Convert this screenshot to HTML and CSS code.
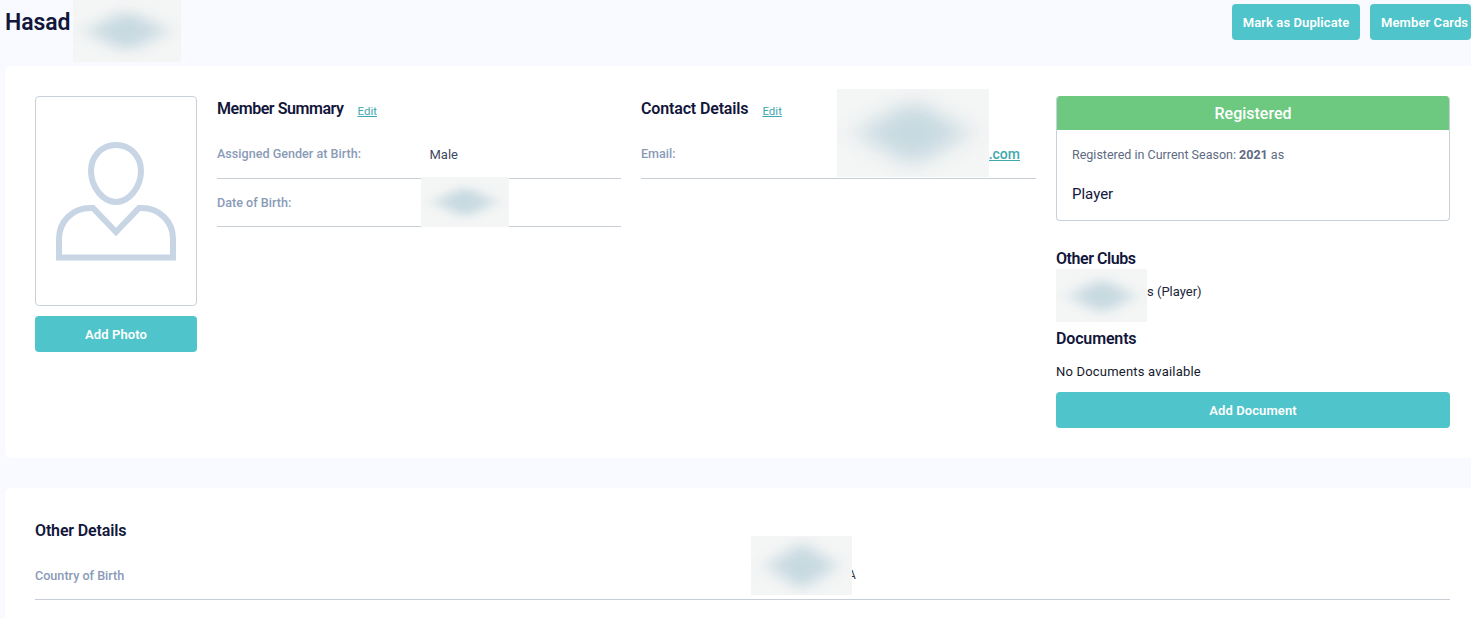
FILE: index.html
```html
<!DOCTYPE html>
<html lang="en">
<head>
<meta charset="utf-8">
<title>Hasad</title>
<link rel="stylesheet" href="styles.css">
</head>
<body>
<header class="top">
  <h1 class="name">Hasad</h1>
  <div class="actions">
    <button class="btn btn-top">Mark as Duplicate</button>
    <button class="btn btn-top">Member Cards</button>
  </div>
</header>
<main class="main">
  <section class="card card-member">
    <div class="photo-col">
      <div class="photo">
        <svg class="avatar" viewBox="0 0 120 122" width="120" height="122" fill="none" stroke="#c7d5e5" stroke-width="6">
          <path d="M60 4C74 4 85 15 85 30C85 46 73 61 60 61C47 61 35 46 35 30C35 15 46 4 60 4Z"/>
          <path d="M3 116.5V98C3 80 17 67 34 67H37L60 91L83 67H86C103 67 117 80 117 98V116.5Z"/>
        </svg>
      </div>
      <button class="btn btn-block">Add Photo</button>
    </div>
    <div class="info-col">
      <div class="sec-head"><h2 class="sec-title tight">Member Summary</h2><a class="edit" href="#">Edit</a></div>
      <div class="row row-first"><span class="label">Assigned Gender at Birth:</span><span class="value">Male</span></div>
      <div class="row"><span class="label">Date of Birth:</span></div>
    </div>
    <div class="info-col">
      <div class="sec-head"><h2 class="sec-title">Contact Details</h2><a class="edit" href="#">Edit</a></div>
      <div class="row row-first row-email"><span class="label">Email:</span><a class="mail" href="#">x.com</a></div>
    </div>
    <div class="side-col">
      <div class="status">
        <div class="status-head">Registered</div>
        <div class="status-body">
          <p class="season">Registered in Current Season: <b>2021</b> as</p>
          <p class="role">Player</p>
        </div>
      </div>
      <h2 class="sec-title tight side-title">Other Clubs</h2>
      <p class="club">s (Player)</p>
      <h2 class="sec-title">Documents</h2>
      <p class="no-docs">No Documents available</p>
      <button class="btn btn-block">Add Document</button>
    </div>
  </section>
  <section class="card card-other">
    <h2 class="sec-title">Other Details</h2>
    <div class="row row-other"><span class="label">Country of Birth</span><span class="country">A</span></div>
  </section>
</main>
<div class="blur blur-name"></div>
<div class="blur blur-email"></div>
<div class="blur blur-dob"></div>
<div class="blur blur-club"></div>
<div class="blur blur-country"></div>
</body>
</html>
```
FILE: styles.css
```css
* { box-sizing: border-box; }
html, body { height: 618px; overflow: hidden; }
body { margin: 0; position: relative; background: #f8faff; color: #11163a; font-family: Roboto, "Liberation Sans", sans-serif; }
h1, h2, p { margin: 0; }
.top { display: flex; justify-content: space-between; align-items: flex-start; height: 66px; padding: 4px 0 0 5px; }
.name { font-size: 23px; font-weight: 600; line-height: 38px; color: #11163a; letter-spacing: -0.1px; }
.actions { display: flex; gap: 10px; width: 239px; flex: none; }
.btn { border: 0; border-radius: 4px; background: #4fc4ca; color: #fff; padding: 1px 0 0; font: 600 13px/16px Roboto, "Liberation Sans", sans-serif; letter-spacing: 0.1px; }
.btn-top { height: 36px; flex: none; }
.btn-top:first-child { width: 128px; }
.btn-top:last-child { width: 101px; text-align: left; padding-left: 11px; white-space: nowrap; }
.main { width: 1480px; padding-left: 5px; }
.card { background: #fff; border-radius: 6px; padding: 30px; }
.card-member { display: flex; gap: 20px; height: 392px; }
.photo-col { width: 162px; flex: none; display: flex; flex-direction: column; gap: 10px; }
.photo { height: 210px; border: 1px solid #c8d0da; border-radius: 4px; display: flex; justify-content: center; padding-top: 44px; }
.avatar { display: block; }
.btn-block { width: 100%; height: 36px; }
.info-col { flex: none; min-width: 0; }
.info-col:nth-child(2) { width: 404px; }
.info-col:nth-child(3) { width: 395px; }
.sec-head { display: flex; align-items: center; gap: 14px; height: 26px; }
.sec-title { font-size: 16px; font-weight: 600; line-height: 26px; color: #11163a; letter-spacing: -0.15px; }
.tight { letter-spacing: -0.45px; }
.edit { font-size: 11.5px; line-height: 16px; color: #3fa9ae; text-decoration: underline; margin-top: 3px; }
.row { display: flex; align-items: center; height: 48px; border-bottom: 1px solid #c8ced6; }
.row-first { margin-top: 8px; height: 48.5px; }
.label { font-size: 12.6px; font-weight: 500; color: #8a9bb8; }
.info-col .label { width: 212.5px; flex: none; }
.value { font-size: 13px; color: #3f4862; padding-top: 1px; }
.row-email { justify-content: space-between; padding-right: 16px; }
.mail { font-size: 14px; font-weight: 500; color: #3fa9ae; }
.side-col { width: 394px; flex: none; }
.status { height: 125px; border: 1px solid #c8d0da; border-top: 0; border-radius: 4px; overflow: hidden; }
.status-head { height: 34px; margin: 0 -1px; background: #6cc97f; color: #fff; font-size: 16px; font-weight: 500; line-height: 35px; text-align: center; }
.status-body { padding: 17px 15px 0; }
.season { font-size: 12.5px; line-height: 16px; color: #5e6b82; }
.season b { font-weight: 700; }
.role { margin-top: 22px; font-size: 15px; line-height: 18px; color: #11163a; }
.side-title { margin-top: 25px; }
.club { height: 54px; padding: 12px 0 0 91px; font-size: 13px; line-height: 16px; color: #20263a; }
.no-docs { margin-top: 12px; font-size: 13px; line-height: 16px; color: #15192c; letter-spacing: 0.2px; }
.side-col .btn-block { margin-top: 12px; }
.card-other { margin-top: 30px; height: 140px; }
.row-other { height: 56px; padding-top: 7px; }
.card-other .label { width: 813px; flex: none; }
.country { font-size: 12px; color: #333; }
.blur { position: absolute; overflow: hidden; background: #f4f5f5; }
.blur::before { content: ""; position: absolute; left: 50%; top: 50%; width: 100px; height: 100px; margin: -50px 0 0 -50px; background: #c8dae1; filter: blur(18px); transform: scale(var(--sx), var(--sy)) rotate(45deg); }
.blur-name { left: 73px; top: 0; width: 108px; height: 62px; --sx: 0.58; --sy: 0.3; }
.blur-email { left: 837px; top: 89px; width: 152px; height: 88px; --sx: 0.8; --sy: 0.48; }
.blur-dob { left: 421px; top: 177px; width: 88px; height: 50px; --sx: 0.44; --sy: 0.22; }
.blur-club { left: 1056px; top: 269px; width: 91px; height: 53px; --sx: 0.46; --sy: 0.25; }
.blur-country { left: 751px; top: 536px; width: 101px; height: 59px; --sx: 0.5; --sy: 0.34; }
```
